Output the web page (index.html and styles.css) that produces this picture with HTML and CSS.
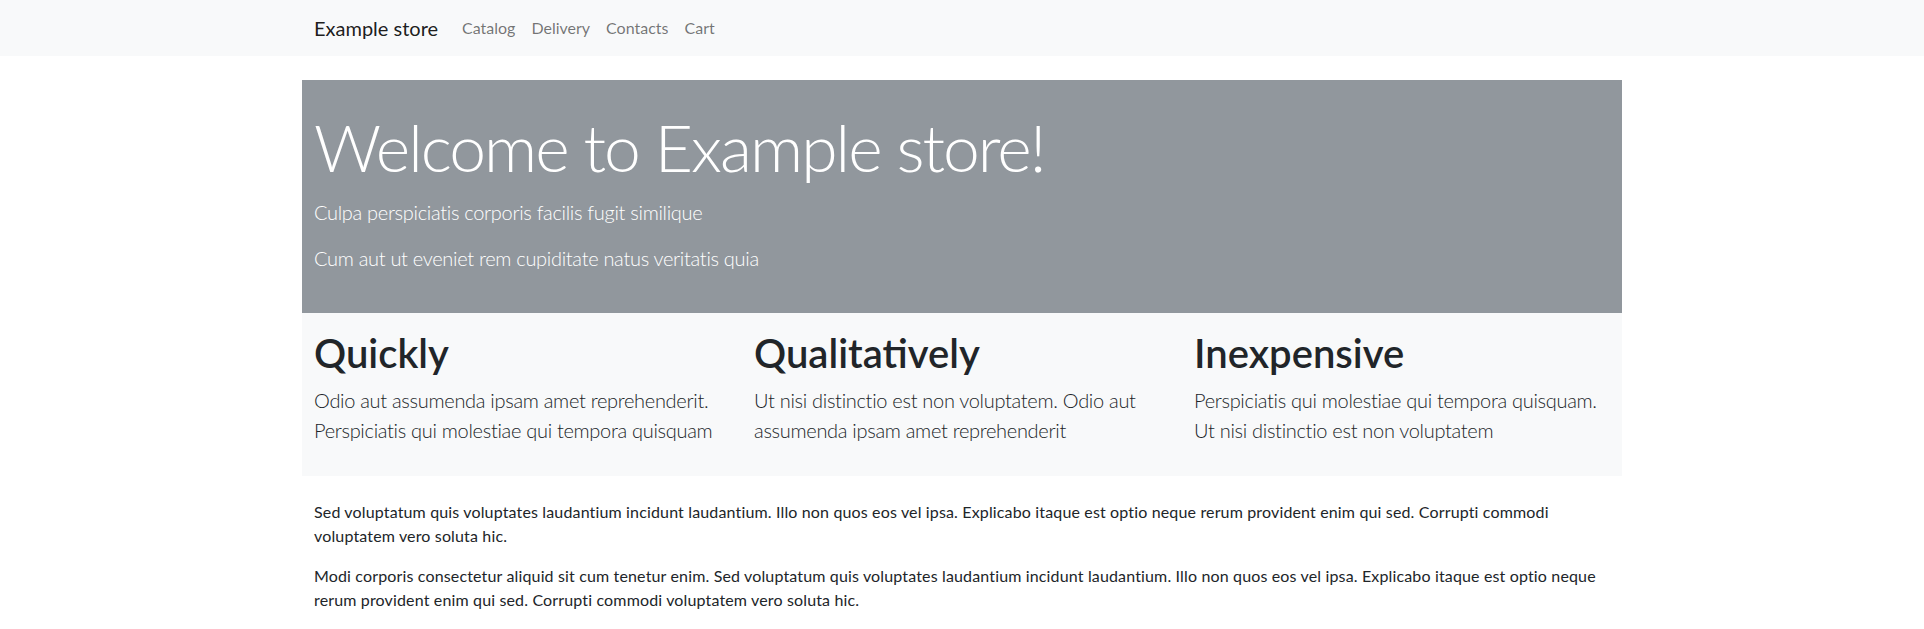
FILE: index.html
```html
<!DOCTYPE html>
<html lang="en">
<head>
<meta charset="utf-8">
<title>Example store</title>
<link rel="stylesheet" href="styles.css">
</head>
<body>
<nav class="navbar">
  <div class="nav-inner">
    <a class="brand" href="#">Example store</a>
    <ul class="nav-links">
      <li><a class="nav-link" href="#">Catalog</a></li>
      <li><a class="nav-link" href="#">Delivery</a></li>
      <li><a class="nav-link" href="#">Contacts</a></li>
      <li><a class="nav-link" href="#">Cart</a></li>
    </ul>
  </div>
</nav>
<main class="page">
  <section class="hero">
    <h1 class="hero-title">Welcome to Example store!</h1>
    <p class="lead">Culpa perspiciatis corporis facilis fugit similique</p>
    <p class="lead">Cum aut ut eveniet rem cupiditate natus veritatis quia</p>
  </section>
  <section class="features">
    <div class="feature">
      <h2 class="feature-title">Quickly</h2>
      <p class="lead">Odio aut assumenda ipsam amet reprehenderit. Perspiciatis qui molestiae qui tempora quisquam</p>
    </div>
    <div class="feature">
      <h2 class="feature-title">Qualitatively</h2>
      <p class="lead">Ut nisi distinctio est non voluptatem. Odio aut assumenda ipsam amet reprehenderit</p>
    </div>
    <div class="feature">
      <h2 class="feature-title">Inexpensive</h2>
      <p class="lead">Perspiciatis qui molestiae qui tempora quisquam. Ut nisi distinctio est non voluptatem</p>
    </div>
  </section>
  <section class="content">
    <p>Sed voluptatum quis voluptates laudantium incidunt laudantium. Illo non quos eos vel ipsa. Explicabo itaque est optio neque rerum provident enim qui sed. Corrupti commodi voluptatem vero soluta hic.</p>
    <p>Modi corporis consectetur aliquid sit cum tenetur enim. Sed voluptatum quis voluptates laudantium incidunt laudantium. Illo non quos eos vel ipsa. Explicabo itaque est optio neque rerum provident enim qui sed. Corrupti commodi voluptatem vero soluta hic.</p>
  </section>
</main>
</body>
</html>
```
FILE: styles.css
```css
* { box-sizing: border-box; }

body {
  margin: 0;
  font-family: Lato, "Open Sans", "Liberation Sans", sans-serif;
  font-size: 16px;
  line-height: 1.5;
  color: #212529;
  background: #fff;
}

.navbar {
  background: #f8f9fa;
  padding: 8px 0;
}

.nav-inner {
  max-width: 1320px;
  margin: 0 auto;
  padding: 0 12px;
  display: flex;
  align-items: center;
}

.brand {
  font-size: 20px;
  line-height: 30px;
  padding: 5px 0;
  margin-right: 16px;
  color: rgba(0, 0, 0, 0.9);
  text-decoration: none;
}

.nav-links {
  display: flex;
  list-style: none;
  margin: 0;
  padding: 0;
}

.nav-link {
  display: block;
  padding: 8px;
  font-size: 16px;
  line-height: 24px;
  color: rgba(0, 0, 0, 0.55);
  text-decoration: none;
}

.page {
  width: 1320px;
  margin: 24px auto 0;
}

.hero {
  background: #91979d;
  color: #fff;
  padding: 24px 12px;
}

.hero-title {
  font-size: 66px;
  font-weight: 300;
  line-height: 85px;
  letter-spacing: -2px;
  margin: 0 0 8px;
}

.lead {
  font-size: 20px;
  font-weight: 300;
  line-height: 1.5;
  letter-spacing: -0.3px;
  margin: 0 0 16px;
}

.features {
  background: #f8f9fa;
  display: grid;
  grid-template-columns: repeat(3, 1fr);
  padding: 16px 0 15px;
}

.feature {
  padding: 0 12px;
}

.feature-title {
  font-size: 40px;
  font-weight: 600;
  line-height: 1.2;
  margin: 0 0 8px;
}

.content {
  padding: 24px 12px 0;
}

.content p {
  margin: 0 0 16px;
  letter-spacing: 0.15px;
}
```
